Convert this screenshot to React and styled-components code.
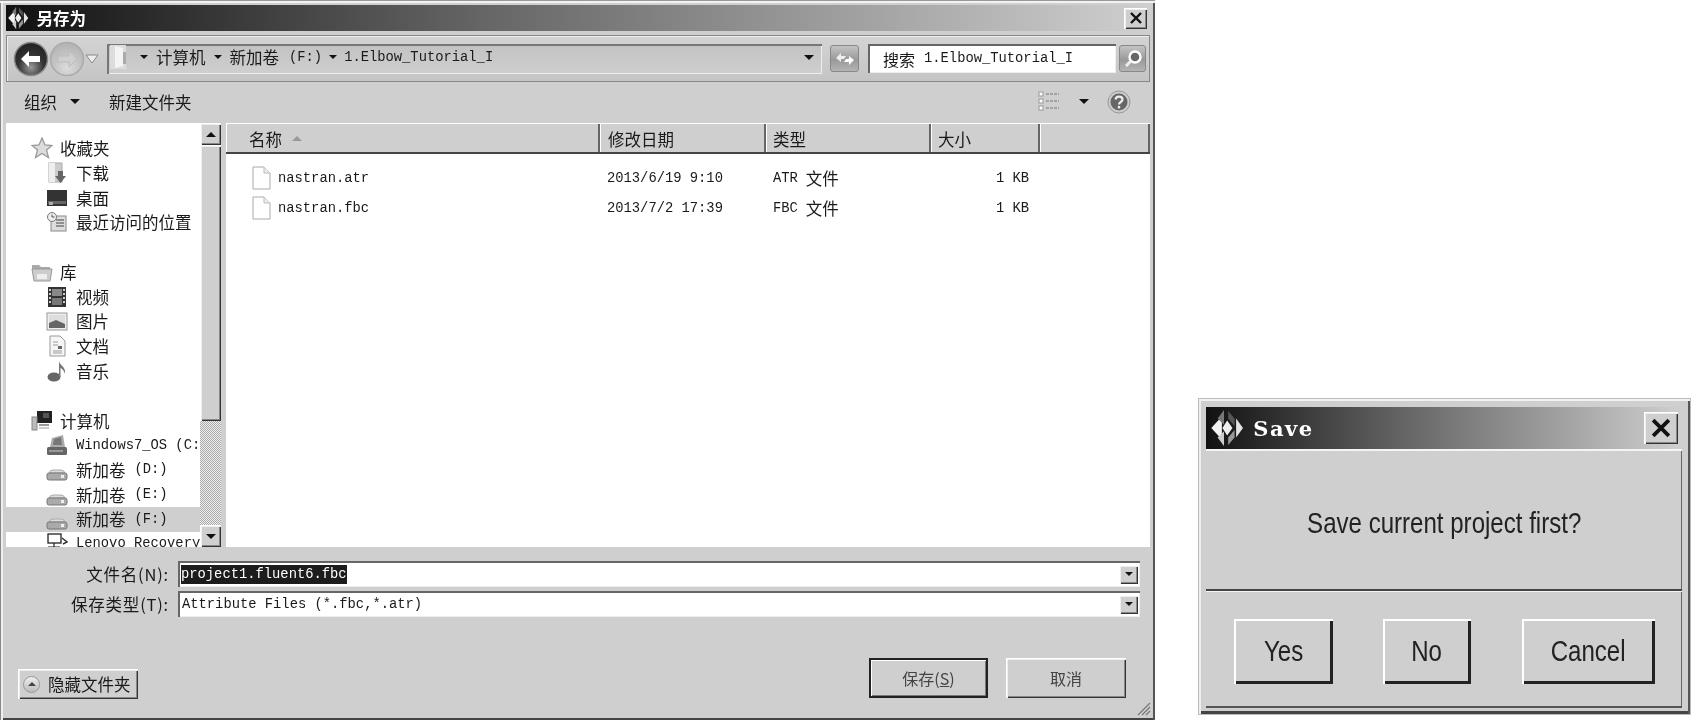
import React from 'react';
import styled, { createGlobalStyle, css } from 'styled-components';

const CJK = '"Noto Sans CJK SC", "Liberation Sans", sans-serif';
const FACE = '#cfcfcf';

const GlobalStyle = createGlobalStyle`
  html, body { margin: 0; padding: 0; background: #fff; }
  * { box-sizing: border-box; }
`;

const raised = css`
  background: ${FACE};
  box-shadow: inset 1px 1px 0 #fff, inset 2px 2px 0 #eee, inset -1px -1px 0 #333, inset -2px -2px 0 #888;
`;

const sunken = css`
  background: #fff;
  box-shadow: inset 2px 2px 0 #666, inset -1px -1px 0 #eee;
`;

const Page = styled.div`
  width: 1692px;
  height: 721px;
  display: flex;
  align-items: flex-start;
  overflow: hidden;
  background: #fff;
  color: #1a1a1a;
  font-family: ${CJK};
  filter: blur(0.35px);
`;

const SaveAsWindow = styled.div`
  position: relative;
  flex: none;
  width: 1155px;
  height: 720px;
  padding: 5px 5px 0 6px;
  display: flex;
  flex-direction: column;
  background: ${FACE};
  box-shadow: inset 0 1px 0 #999, inset 0 3px 0 #f2f2f2, inset 1px 0 0 #888, inset 3px 0 0 #eee, inset -2px 0 0 #555, inset 0 -2px 0 #444;
`;

const TitleBar = styled.div`
  flex: none;
  display: flex;
  align-items: center;
  height: ${p => p.$h}px;
  padding: ${p => p.$pad};
  gap: ${p => p.$gap}px;
  background: linear-gradient(90deg, #111 0%, #222 8%, #666 42%, #999 70%, #cfcfcf 100%);
`;

const TitleText = styled.span`
  flex: 1;
  color: #fff;
  font-weight: 700;
  font-size: 16.5px;
  line-height: 1;
`;

const SaveTitleText = styled.span`
  flex: 1;
  color: #fff;
  font-family: "DejaVu Serif", serif;
  font-weight: 700;
  font-size: 21px;
  letter-spacing: 1.5px;
`;

const CloseButton = styled.div`
  ${raised}
  width: ${p => p.$size}px;
  height: ${p => p.$size - 2}px;
  display: flex;
  align-items: center;
  justify-content: center;
`;

const AddressBar = styled.div`
  flex: none;
  height: 47px;
  margin-top: 4px;
  padding: 0 3px 0 7px;
  display: flex;
  align-items: center;
  background: linear-gradient(#d4d4d4, #c4c4c4);
  box-shadow: inset 0 0 0 1px #888, inset 2px 2px 0 #eee;
`;

const Breadcrumb = styled.div`
  width: 715px;
  height: 30px;
  margin-left: 8px;
  padding: 0 8px 3px 2px;
  display: flex;
  align-items: center;
  background: linear-gradient(#c2c2c2, #cfcfcf);
  box-shadow: inset 2px 2px 0 #777, inset -1px -1px 0 #eee;
  font-size: 16.5px;
`;

const Crumb = styled.span`
  display: flex;
  align-items: center;
  gap: 10px;
  margin: 0 ${p => p.$mr}px 0 ${p => p.$ml}px;
  white-space: nowrap;
`;

const Caret = styled.i`
  display: inline-block;
  flex: none;
  width: 0;
  height: 0;
  margin: ${p => p.$m || '0'};
  border-left: ${p => p.$s || 4}px solid transparent;
  border-right: ${p => p.$s || 4}px solid transparent;
  border-top: ${p => p.$s || 4}px solid #111;
`;

const Mono = styled.span`
  margin-left: ${p => p.$ml || 0}px;
  font-family: "Liberation Mono", monospace;
  font-size: 13.8px;
  white-space: pre;
`;

const SmallButton = styled.div`
  flex: none;
  width: ${p => p.$w}px;
  height: 27px;
  margin: ${p => p.$m};
  border: 1px solid #888;
  border-radius: 3px;
  display: flex;
  align-items: center;
  justify-content: center;
  background: linear-gradient(#c4c4c4, #999 55%, #b4b4b4);
`;

const SearchBox = styled.div`
  ${sunken}
  width: 248px;
  height: 29px;
  margin-left: 9px;
  padding-left: 15px;
  display: flex;
  align-items: center;
  gap: 9px;
  font-size: 16px;
`;

const Toolbar = styled.div`
  flex: none;
  height: 41px;
  padding: 0 19px 2px 18px;
  display: flex;
  align-items: center;
  font-size: 16.5px;
`;

const ToolLabel = styled.span`
  margin-left: ${p => p.$ml}px;
`;

const HelpSlot = styled.span`
  display: flex;
  margin-left: 18px;
`;

const ToolSpacer = styled.div`
  flex: 1;
`;

const Panes = styled.div`
  flex: none;
  height: 424px;
  display: flex;
`;

const Sidebar = styled.div`
  flex: none;
  width: 194px;
  height: 100%;
  overflow: hidden;
  padding-top: 13px;
  background: #fff;
`;

const NavGroup = styled.div`
  margin-bottom: 25px;
`;

const NavRow = styled.div`
  height: 24.7px;
  display: flex;
  align-items: center;
  gap: ${p => (p.$head ? 7 : 8)}px;
  padding-left: ${p => (p.$head ? 25 : 40)}px;
  background: ${p => (p.$active ? FACE : 'transparent')};
  font-size: 16.5px;
  white-space: nowrap;
`;

const ScrollBar = styled.div`
  flex: none;
  width: 21px;
  height: 100%;
  display: flex;
  flex-direction: column;
  background: repeating-conic-gradient(#aaa 0 25%, #eee 0 50%) 0 0 / 2px 2px;
`;

const ScrollButton = styled.div`
  ${raised}
  flex: none;
  height: 22px;
  display: flex;
  align-items: center;
  justify-content: center;
`;

const UpCaret = styled.i`
  width: 0;
  height: 0;
  border-left: ${p => p.$s || 5}px solid transparent;
  border-right: ${p => p.$s || 5}px solid transparent;
  border-bottom: ${p => p.$s || 5}px solid ${p => p.$color || '#111'};
`;

const ScrollThumb = styled.div`
  ${raised}
  flex: none;
  height: 276px;
`;

const ScrollTrack = styled.div`
  flex: 1;
`;

const FileList = styled.div`
  flex: 1;
  height: 100%;
  margin-left: 5px;
  background: #fff;
`;

const ColumnGrid = css`
  display: grid;
  grid-template-columns: 374px 166px 165px 109px 1fr;
`;

const HeaderRow = styled.div`
  ${ColumnGrid}
  height: 31px;
  margin-bottom: 9px;
  border-bottom: 2px solid #444;
  background: ${FACE};
  font-size: 16.5px;
`;

const HeaderCell = styled.div`
  display: flex;
  align-items: center;
  gap: 10px;
  padding-top: 2px;
  padding-left: ${p => p.$pad || 0}px;
  box-shadow: inset 1px 1px 0 #fff, inset -2px 0 0 #666;
`;

const FileRow = styled.div`
  ${ColumnGrid}
  height: 30px;
  font-size: 16.5px;
`;

const FileName = styled.div`
  display: flex;
  align-items: center;
  gap: 7px;
  padding-left: 26px;
`;

const FileCell = styled.div`
  display: flex;
  align-items: center;
  gap: 8px;
  padding-left: 7px;
  justify-content: ${p => (p.$right ? 'flex-end' : 'flex-start')};
  padding-right: ${p => (p.$right ? 11 : 0)}px;
`;

const FormRow = styled.div`
  flex: none;
  display: flex;
  align-items: center;
  height: 26px;
  margin-top: ${p => p.$top}px;
`;

const FormLabel = styled.div`
  width: 163px;
  text-align: right;
  font-size: 16.5px;
  letter-spacing: 0.8px;
  white-space: nowrap;
`;

const FormField = styled.div`
  ${sunken}
  width: 962px;
  height: 100%;
  margin-left: 9px;
  padding: 3px 2px 3px 3px;
  display: flex;
  align-items: center;
  justify-content: space-between;
`;

const Selected = styled(Mono)`
  background: #1c1c1c;
  color: #fff;
  line-height: 19px;
`;

const DropButton = styled.div`
  ${raised}
  width: 19px;
  height: 19px;
  display: flex;
  align-items: center;
  justify-content: center;
`;

const Footer = styled.div`
  flex: 1;
  display: flex;
  padding: 41px 24px 0 12px;
`;

const HideButton = styled.div`
  ${raised}
  width: 120px;
  height: 30px;
  margin-top: 11px;
  padding-left: 5px;
  display: flex;
  align-items: center;
  gap: 8px;
  font-size: 16.5px;
  white-space: nowrap;
`;

const HideCircle = styled.span`
  width: 17px;
  height: 17px;
  border-radius: 50%;
  border: 1px solid #999;
  background: linear-gradient(#eee, #bbb);
  display: flex;
  align-items: center;
  justify-content: center;
`;

const FooterSpacer = styled.div`
  flex: 1;
`;

const DialogButton = styled.div`
  ${p => (p.$default
    ? css`
      background: ${FACE};
      border: 2px solid #222;
      box-shadow: inset 1px 1px 0 #fff, inset -1px -1px 0 #777;
    `
    : raised)}
  width: ${p => p.$w}px;
  height: 40px;
  margin-left: ${p => p.$ml || 0}px;
  display: flex;
  align-items: center;
  justify-content: center;
  font-size: 16px;
  color: #444;
`;

const Grip = styled.svg`
  position: absolute;
  right: 4px;
  bottom: 4px;
`;

const SaveWindow = styled.div`
  flex: none;
  width: 491px;
  height: 315px;
  margin: 399px 0 0 44px;
  padding: 8px 8px 0 7px;
  display: flex;
  flex-direction: column;
  background: ${FACE};
  font-family: "Liberation Sans", Arial, sans-serif;
  box-shadow: inset 0 2px 0 #f2f2f2, inset 2px 0 0 #eee, inset -2px 0 0 #555, inset 0 -3px 0 #444, 0 0 0 1px #bbb;
`;

// the message font of this dialog is a stretched bitmap: tall and narrow
const TallText = styled.span`
  display: inline-block;
  font-size: 29px;
  color: #222;
  transform: scaleX(0.83);
  white-space: nowrap;
`;

const SaveBody = styled.div`
  flex: none;
  height: 142px;
  display: flex;
  align-items: center;
  justify-content: center;
  padding-top: 8px;
  border-bottom: 2px solid #444;
  box-shadow: inset 0 2px 0 #f4f4f4, inset -1px 0 0 #666;
`;

const SaveActions = styled.div`
  flex: none;
  height: 117px;
  padding: 27px 0 0 28px;
  display: flex;
  align-items: flex-start;
  border-top: 1px solid #f4f4f4;
  border-bottom: 2px solid #555;
  box-shadow: inset -1px 0 0 #666;
`;

const SaveButton = styled.div`
  ${raised}
  box-shadow: inset 2px 2px 0 #fff, inset -3px -3px 0 #222;
  width: ${p => p.$w}px;
  height: 65px;
  margin-right: ${p => p.$mr || 0}px;
  display: flex;
  align-items: center;
  justify-content: center;
`;

const GlyphSvg = styled.svg`
  flex: none;
`;

function Logo({ size }) {
  return (
    <svg width={size * 0.85} height={size} viewBox="0 0 30 36">
      <polygon points="0,18 10,7 10,29" fill="#f2f2f2" />
      <polygon points="12,1 12,15 6,9" fill="#777" />
      <polygon points="12,35 12,21 6,27" fill="#ccc" />
      <polygon points="15,11 20,18 15,25 10.5,18" fill="#eee" />
      <polygon points="16,2 16,9 22,16 22,9" fill="#555" />
      <polygon points="16,34 16,27 22,20 22,27" fill="#999" />
      <polygon points="30,18 23.5,9 23.5,27" fill="#e4e4e4" />
    </svg>
  );
}

function CloseMark({ size }) {
  return (
    <svg width={size} height={size} viewBox="0 0 14 14">
      <path d="M2 2 L12 12 M12 2 L2 12" stroke="#111" strokeWidth="2.4" />
    </svg>
  );
}

function RoundNav({ dark }) {
  const id = dark ? 'navDark' : 'navLight';
  return (
    <svg width="36" height="38" viewBox="0 0 36 38">
      <defs>
        <radialGradient id={id} cx="50%" cy="75%" r="70%">
          <stop offset="0" stopColor={dark ? '#999' : '#ddd'} />
          <stop offset="0.55" stopColor={dark ? '#333' : '#c4c4c4'} />
          <stop offset="1" stopColor={dark ? '#222' : '#b4b4b4'} />
        </radialGradient>
      </defs>
      <circle cx="18" cy="19" r="16.5" fill={`url(#${id})`} stroke={dark ? '#888' : '#aaa'} strokeWidth="1.5" />
      {dark
        ? <path d="M8 19 L16 11 V16 H27 V22 H16 V27 Z" fill="#fff" />
        : <path d="M28 19 L20 11 V16 H9 V22 H20 V27 Z" fill="#cfcfcf" stroke="#bbb" />}
    </svg>
  );
}

function NavDropdown() {
  return (
    <svg width="14" height="10" viewBox="0 0 14 10">
      <path d="M1 1 H13 L7 9 Z" fill="#eee" stroke="#888" />
    </svg>
  );
}

function FolderCrumb() {
  return (
    <svg width="18" height="26" viewBox="0 0 18 26">
      <rect x="1" y="1" width="16" height="24" fill="#dcdcdc" />
      <path d="M6 2 L14 4 V22 L6 24 Z" fill="#f4f4f4" />
      <rect x="14" y="8" width="3" height="12" fill="#aaa" />
    </svg>
  );
}

function RefreshIcon() {
  return (
    <svg width="20" height="16" viewBox="0 0 20 16">
      <path d="M1 7 L6 2 V5 H11 L9 8 H6 V11 Z" fill="#eee" />
      <path d="M19 9 L14 14 V11 H9 L11 8 H14 V5 Z" fill="#fff" />
    </svg>
  );
}

function SearchIcon() {
  return (
    <svg width="20" height="20" viewBox="0 0 20 20">
      <circle cx="12" cy="8" r="5.5" fill="#666" stroke="#fff" strokeWidth="2.4" />
      <path d="M8 12 L3 17" stroke="#eee" strokeWidth="3" />
    </svg>
  );
}

function ViewIcon() {
  return (
    <svg width="22" height="22" viewBox="0 0 22 22">
      {[3, 10, 17].map(y => (
        <g key={y}>
          <rect x="1" y={y - 2} width="4" height="4" fill="#fff" stroke="#999" />
          <path d={`M8 ${y} H21`} stroke="#777" strokeDasharray="3 1" />
        </g>
      ))}
    </svg>
  );
}

function HelpIcon() {
  return (
    <svg width="24" height="24" viewBox="0 0 24 24">
      <circle cx="12" cy="12" r="11" fill="#ccc" stroke="#999" />
      <circle cx="12" cy="12" r="8.5" fill="#666" />
      <path d="M8.5 9.5 C9 5.5 15.5 6 15.5 9.5 C15.5 12 12 12 12 14.5" fill="none" stroke="#eee" strokeWidth="2.2" />
      <rect x="10.8" y="16" width="2.4" height="2.4" fill="#eee" />
    </svg>
  );
}

function Glyph({ children }) {
  return (
    <GlyphSvg width="22" height="22" viewBox="0 0 22 22">
      {children}
    </GlyphSvg>
  );
}

const navIcons = {
  star: (
    <Glyph>
      <polygon points="11,1 14,8 21,8.5 15.5,13 17.5,20.5 11,16.5 4.5,20.5 6.5,13 1,8.5 8,8" fill="#dcdcdc" stroke="#999" strokeWidth="1.3" />
    </Glyph>
  ),
  download: (
    <Glyph>
      <rect x="3" y="1" width="13" height="19" fill="#ccc" stroke="#aaa" />
      <rect x="3" y="1" width="6" height="19" fill="#eee" />
      <path d="M12 9 H17 V14 H20 L14.5 21 L9 14 H12 Z" fill="#666" />
    </Glyph>
  ),
  desktop: (
    <Glyph>
      <rect x="1" y="3" width="20" height="16" fill="#333" />
      <rect x="2" y="14" width="18" height="3" fill="#666" />
      <rect x="3" y="15" width="4" height="3" fill="#aaa" />
    </Glyph>
  ),
  recent: (
    <Glyph>
      <rect x="5" y="5" width="15" height="15" fill="#ddd" stroke="#888" />
      <circle cx="6" cy="6" r="4.5" fill="#eee" stroke="#777" />
      <path d="M6 3.5 V6 H8.5" stroke="#555" fill="none" />
      <path d="M10 9 H18 M10 12 H18 M10 15 H18" stroke="#777" strokeWidth="1.5" />
    </Glyph>
  ),
  library: (
    <Glyph>
      <path d="M1 8 V4 H8 L10 6 H19 V9 Z" fill="#aaa" />
      <path d="M1 8 H21 L19 20 H3 Z" fill="#ccc" stroke="#999" />
      <path d="M6 18 V13 H16 V18" fill="#eee" />
    </Glyph>
  ),
  video: (
    <Glyph>
      <rect x="2" y="1" width="18" height="20" fill="#333" />
      <rect x="6" y="3" width="10" height="7" fill="#888" />
      <rect x="6" y="12" width="10" height="7" fill="#777" />
      {[3, 7, 11, 15].map(y => (
        <g key={y}>
          <rect x="3" y={y} width="2" height="2" fill="#ccc" />
          <rect x="17" y={y} width="2" height="2" fill="#ccc" />
        </g>
      ))}
    </Glyph>
  ),
  picture: (
    <Glyph>
      <rect x="1" y="3" width="20" height="17" fill="#eee" stroke="#999" />
      <rect x="3" y="5" width="16" height="13" fill="#ddd" />
      <path d="M3 13 L10 10 L19 14 V18 H3 Z" fill="#666" />
    </Glyph>
  ),
  doc: (
    <Glyph>
      <path d="M4 1 H14 L19 6 V21 H4 Z" fill="#f6f6f6" stroke="#999" />
      <path d="M7 7 H12 M7 10 H12 M7 16 H16 M7 18 H16" stroke="#999" />
      <rect x="12" y="11" width="4" height="3" fill="#666" />
    </Glyph>
  ),
  music: (
    <Glyph>
      <ellipse cx="8" cy="17" rx="6.5" ry="4.5" fill="#666" />
      <path d="M13 17 V1 C14 6 20 6 19 14 C18 10 15 8 14.5 8 V17 Z" fill="#777" />
    </Glyph>
  ),
  computer: (
    <Glyph>
      <rect x="6" y="1" width="15" height="12" fill="#222" />
      <rect x="12" y="3" width="6" height="5" fill="#555" />
      <rect x="8" y="14" width="10" height="2" fill="#999" />
      <rect x="1" y="7" width="5" height="13" fill="#bbb" stroke="#888" />
      <rect x="8" y="17" width="10" height="2" fill="#ccc" />
    </Glyph>
  ),
  system: (
    <Glyph>
      <rect x="1" y="13" width="20" height="8" rx="1.5" fill="#666" />
      <path d="M4 13 L6 4 L17 1 L19 13 Z" fill="#aaa" />
      <path d="M8 5 L15 3 L16 11 L7 11 Z" fill="#777" />
      <rect x="3" y="16" width="14" height="2" fill="#999" />
    </Glyph>
  ),
  drive: (
    <Glyph>
      <path d="M3 14 Q4 11 7 11 H15 Q18 11 19 14 Z" fill="#ddd" stroke="#aaa" />
      <rect x="1" y="14" width="20" height="7" rx="2" fill="#aaa" stroke="#777" />
      <rect x="15" y="16" width="3" height="3" fill="#eee" />
    </Glyph>
  ),
  recovery: (
    <Glyph>
      <rect x="2" y="1" width="13" height="9" fill="#fff" stroke="#222" strokeWidth="1.3" />
      <path d="M8 10 V14 M2 14 H14 M2 14 V19 H6 V14 M10 14 V19 H14 V14" stroke="#222" fill="none" strokeWidth="1.2" />
      <path d="M16 5 L21 9 L17 11" stroke="#333" fill="none" strokeWidth="1.5" />
    </Glyph>
  ),
};

function FileIcon() {
  return (
    <GlyphSvg width="19" height="24" viewBox="0 0 19 24">
      <path d="M1 1 H12 L18 7 V23 H1 Z" fill="#fff" stroke="#aaa" />
      <path d="M12 1 V7 H18" fill="#eee" stroke="#bbb" />
    </GlyphSvg>
  );
}

// text for a drive row: chinese name then the bitmap-looking latin part
const driveRow = (letter, active) => (
  <NavRow key={letter} $active={active}>
    {navIcons.drive}
    <span>新加卷</span>
    <Mono $ml={1}>({letter}:)</Mono>
  </NavRow>
);

const files = [
  { name: 'nastran.atr', date: '2013/6/19 9:10', kind: 'ATR' },
  { name: 'nastran.fbc', date: '2013/7/2 17:39', kind: 'FBC' },
];

export default function App() {
  return (
    <Page>
      <GlobalStyle />
      <SaveAsWindow>
        <TitleBar $h={26} $pad="0 3px 0 2px" $gap={8}>
          <Logo size={24} />
          <TitleText>另存为</TitleText>
          <CloseButton $size={23}>
            <CloseMark size={14} />
          </CloseButton>
        </TitleBar>

        <AddressBar>
          <RoundNav dark />
          <RoundNav />
          <NavDropdown />
          <Breadcrumb>
            <FolderCrumb />
            <Caret $m="0 8px 0 13px" />
            <Crumb $ml={0} $mr={8}>计算机</Crumb>
            <Caret />
            <Crumb $ml={8} $mr={7}>新加卷<Mono>(F:)</Mono></Crumb>
            <Caret />
            <Mono $ml={7}>1.Elbow_Tutorial_I</Mono>
            <ToolSpacer />
            <Caret $s={5} />
          </Breadcrumb>
          <SmallButton $w={29} $m="0 0 0 8px"><RefreshIcon /></SmallButton>
          <SearchBox>
            <span>搜索</span>
            <Mono>1.Elbow_Tutorial_I</Mono>
          </SearchBox>
          <SmallButton $w={27} $m="0 0 0 3px"><SearchIcon /></SmallButton>
        </AddressBar>

        <Toolbar>
          <span>组织</span>
          <Caret $s={5} $m="0 0 0 13px" />
          <ToolLabel $ml={29}>新建文件夹</ToolLabel>
          <ToolSpacer />
          <ViewIcon />
          <Caret $s={5} $m="0 0 0 19px" />
          <HelpSlot><HelpIcon /></HelpSlot>
        </Toolbar>

        <Panes>
          <Sidebar>
            <NavGroup>
              <NavRow $head>{navIcons.star}<span>收藏夹</span></NavRow>
              <NavRow>{navIcons.download}<span>下载</span></NavRow>
              <NavRow>{navIcons.desktop}<span>桌面</span></NavRow>
              <NavRow>{navIcons.recent}<span>最近访问的位置</span></NavRow>
            </NavGroup>
            <NavGroup>
              <NavRow $head>{navIcons.library}<span>库</span></NavRow>
              <NavRow>{navIcons.video}<span>视频</span></NavRow>
              <NavRow>{navIcons.picture}<span>图片</span></NavRow>
              <NavRow>{navIcons.doc}<span>文档</span></NavRow>
              <NavRow>{navIcons.music}<span>音乐</span></NavRow>
            </NavGroup>
            <NavGroup>
              <NavRow $head>{navIcons.computer}<span>计算机</span></NavRow>
              <NavRow>{navIcons.system}<Mono>Windows7_OS (C:)</Mono></NavRow>
              {driveRow('D')}
              {driveRow('E')}
              {driveRow('F', true)}
              <NavRow>{navIcons.recovery}<Mono>Lenovo Recovery</Mono></NavRow>
            </NavGroup>
          </Sidebar>

          <ScrollBar>
            <ScrollButton><UpCaret /></ScrollButton>
            <ScrollThumb />
            <ScrollTrack />
            <ScrollButton><Caret $s={5} /></ScrollButton>
          </ScrollBar>

          <FileList>
            <HeaderRow>
              <HeaderCell $pad={23}>名称<UpCaret $color="#999" /></HeaderCell>
              <HeaderCell $pad={8}>修改日期</HeaderCell>
              <HeaderCell $pad={7}>类型</HeaderCell>
              <HeaderCell $pad={7}>大小</HeaderCell>
              <HeaderCell />
            </HeaderRow>
            {files.map(f => (
              <FileRow key={f.name}>
                <FileName><FileIcon /><Mono>{f.name}</Mono></FileName>
                <FileCell><Mono>{f.date}</Mono></FileCell>
                <FileCell><Mono>{f.kind}</Mono>文件</FileCell>
                <FileCell $right><Mono>1 KB</Mono></FileCell>
                <div />
              </FileRow>
            ))}
          </FileList>
        </Panes>

        <FormRow $top={14}>
          <FormLabel>文件名(N):</FormLabel>
          <FormField>
            <Selected>project1.fluent6.fbc</Selected>
            <DropButton><Caret /></DropButton>
          </FormField>
        </FormRow>
        <FormRow $top={4}>
          <FormLabel>保存类型(T):</FormLabel>
          <FormField>
            <Mono $ml={1}>Attribute Files (*.fbc,*.atr)</Mono>
            <DropButton><Caret /></DropButton>
          </FormField>
        </FormRow>

        <Footer>
          <HideButton>
            <HideCircle><UpCaret $s={4} $color="#444" /></HideCircle>
            隐藏文件夹
          </HideButton>
          <FooterSpacer />
          <DialogButton $default $w={119}>保存(<u>S</u>)</DialogButton>
          <DialogButton $w={120} $ml={18}>取消</DialogButton>
        </Footer>

        <Grip width="16" height="16" viewBox="0 0 16 16">
          <path d="M15 3 L3 15 M15 7 L7 15 M15 11 L11 15" stroke="#777" strokeWidth="1.2" />
        </Grip>
      </SaveAsWindow>

      <SaveWindow>
        <TitleBar $h={42} $pad="0 4px 0 5px" $gap={10}>
          <Logo size={38} />
          <SaveTitleText>Save</SaveTitleText>
          <CloseButton $size={34}>
            <CloseMark size={22} />
          </CloseButton>
        </TitleBar>
        <SaveBody><TallText>Save current project first?</TallText></SaveBody>
        <SaveActions>
          <SaveButton $w={99} $mr={50}><TallText>Yes</TallText></SaveButton>
          <SaveButton $w={88} $mr={51}><TallText>No</TallText></SaveButton>
          <SaveButton $w={133}><TallText>Cancel</TallText></SaveButton>
        </SaveActions>
      </SaveWindow>
    </Page>
  );
}
